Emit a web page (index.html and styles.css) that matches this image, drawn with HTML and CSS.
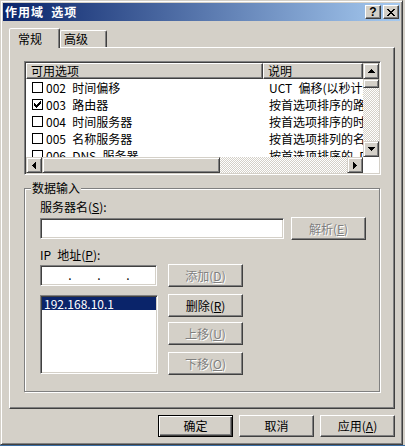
FILE: index.html
```html
<!doctype html>
<html lang="zh-CN">
<head>
    <meta charset="UTF-8">
    <title>作用域 选项</title>
    <link rel="stylesheet" href="styles.css">
</head>
<body>

<div class="window">
    <div class="titlebar">
        <span class="title">作用域 选项</span>
        <span class="cap-btn help">?</span>
        <span class="cap-btn close">
            <svg width="8" height="7" viewBox="0 0 8 7"><path d="M0 0h2v1H0zM6 0h2v1H6zM1 1h2v1H1zM5 1h2v1H5zM2 2h4v1H2zM3 3h2v1H3zM2 4h4v1H2zM1 5h2v1H1zM5 5h2v1H5zM0 6h2v1H0zM6 6h2v1H6z"/></svg>
        </span>
    </div>

    <div class="client">
        <div class="tabs">
            <div class="tab active">常规</div>
            <div class="tab">高级</div>
        </div>

        <div class="tab-page">
            <div class="listview">
                <div class="lv-main">
                    <div class="lv-header">
                        <div class="lv-col c1">可用选项</div>
                        <div class="lv-col c2">说明</div>
                    </div>
                    <ul class="lv-rows">
                        <li>
                            <span class="c1"><span class="check"></span>002 时间偏移</span>
                            <span class="c2">UCT 偏移(以秒计)</span>
                        </li>
                        <li>
                            <span class="c1"><span class="check"><svg width="7" height="7" viewBox="0 0 7 7"><path d="M6 0h1v1H6zM5 1h2v1H5zM0 2h1v1H0zM4 2h3v1H4zM0 3h2v1H0zM3 3h3v1H3zM0 4h5v1H0zM1 5h3v1H1zM2 6h1v1H2z"/></svg></span>003 路由器</span>
                            <span class="c2">按首选项排序的路由器地址数组</span>
                        </li>
                        <li>
                            <span class="c1"><span class="check"></span>004 时间服务器</span>
                            <span class="c2">按首选项排序的时间服务器地址数组</span>
                        </li>
                        <li>
                            <span class="c1"><span class="check"></span>005 名称服务器</span>
                            <span class="c2">按首选项排列的名称服务器地址数组</span>
                        </li>
                        <li>
                            <span class="c1"><span class="check"></span>006 DNS 服务器</span>
                            <span class="c2">按首选项排序的 DNS 服务器数组</span>
                        </li>
                    </ul>
                </div>
                <div class="vscroll">
                    <div class="sb-btn"><svg width="7" height="4" viewBox="0 0 7 4"><path d="M3 0h1v1H3zM2 1h3v1H2zM1 2h5v1H1zM0 3h7v1H0z"/></svg></div>
                    <div class="sb-thumb v"></div>
                    <div class="sb-track"></div>
                    <div class="sb-btn"><svg width="7" height="4" viewBox="0 0 7 4"><path d="M0 0h7v1H0zM1 1h5v1H1zM2 2h3v1H2zM3 3h1v1H3z"/></svg></div>
                </div>
                <div class="hscroll">
                    <div class="sb-btn"><svg width="4" height="7" viewBox="0 0 4 7"><path d="M3 0h1v7H3zM2 1h1v5H2zM1 2h1v3H1zM0 3h1v1H0z"/></svg></div>
                    <div class="sb-thumb h"></div>
                    <div class="sb-track"></div>
                    <div class="sb-btn"><svg width="4" height="7" viewBox="0 0 4 7"><path d="M0 0h1v7H0zM1 1h1v5H1zM2 2h1v3H2zM3 3h1v1H3z"/></svg></div>
                </div>
                <div class="sb-corner"></div>
            </div>

            <div class="group">
                <div class="group-title">数据输入</div>
                <div class="group-body">
                    <div class="field-label">服务器名(<u>S</u>):</div>
                    <div class="field-row">
                        <div class="textbox server-name"></div>
                        <div class="btn disabled resolve">解析(<u>E</u>)</div>
                    </div>

                    <div class="field-label second">IP 地址(<u>P</u>):</div>
                    <div class="field-row ip-row">
                        <div class="textbox ip-box">
                            <span class="oct"></span><span class="dot">.</span>
                            <span class="oct"></span><span class="dot">.</span>
                            <span class="oct"></span><span class="dot">.</span>
                            <span class="oct"></span>
                        </div>
                        <div class="btn disabled add">添加(<u>D</u>)</div>
                    </div>

                    <div class="ip-list-row">
                        <ul class="listbox">
                            <li class="selected">192.168.10.1</li>
                        </ul>
                        <div class="side-btns">
                            <div class="btn">删除(<u>R</u>)</div>
                            <div class="btn disabled up">上移(<u>U</u>)</div>
                            <div class="btn disabled down">下移(<u>O</u>)</div>
                        </div>
                    </div>
                </div>
            </div>
        </div>

        <div class="dlg-buttons">
            <div class="btn default">确定</div>
            <div class="btn">取消</div>
            <div class="btn">应用(<u>A</u>)</div>
        </div>
    </div>
</div>
<div class="desktop-edge"></div>

</body>
</html>
```

FILE: styles.css
```css
* {
    margin: 0;
    padding: 0;
    box-sizing: border-box;
    list-style: none;
}

html,
body {
    background-color: #d4d0c8;
}

body {
    width: 405px;
    height: 446px;
    overflow: hidden;
    font: 12px "Noto Sans CJK SC", "Liberation Sans", sans-serif;
    word-spacing: 3.5px;
    color: #000;
}

svg {
    display: block;
    fill: #000;
}

.window {
    width: 403px;
    height: 445px;
    padding: 2px;
    border: 1px solid;
    border-color: #d4d0c8 #404040 #404040 #d4d0c8;
    box-shadow: inset 1px 1px #fff, inset -1px -1px #808080;
}

.desktop-edge {
    height: 1px;
    background-color: #3a6ea5;
}

/* title bar */
.titlebar {
    display: flex;
    align-items: center;
    height: 18px;
    padding: 0 1px 0 2px;
    background: linear-gradient(to right, #0a246a, #a6caf0);
    color: #fff;
}

.titlebar .title {
    flex: 1;
    font-weight: bold;
    line-height: 18px;
    letter-spacing: 1px;
}

.cap-btn {
    display: flex;
    align-items: center;
    justify-content: center;
    width: 16px;
    height: 14px;
    margin-left: 2px;
    color: #000;
    background-color: #d4d0c8;
    border: 1px solid;
    border-color: #fff #404040 #404040 #fff;
    box-shadow: inset -1px -1px #808080;
}

.cap-btn.help {
    font: bold 12px "Liberation Sans", sans-serif;
    line-height: 12px;
}

/* tabs */
.client {
    padding: 7px 5px 0 6px;
}

.tabs {
    display: flex;
    align-items: flex-end;
    height: 19px;
}

.tab {
    width: 47px;
    height: 17px;
    padding-left: 3px;
    line-height: 16px;
    border: 1px solid;
    border-bottom: 0;
    border-color: #fff #404040 transparent #fff;
    border-radius: 2px 2px 0 0;
    box-shadow: inset -1px 0 #808080;
}

.tab.active {
    position: relative;
    z-index: 1;
    width: 51px;
    height: 20px;
    margin-bottom: -1px;
    padding-left: 8px;
    line-height: 19px;
    background-color: #d4d0c8;
}

.tab-page {
    height: 362px;
    padding: 13px 0 0 14px;
    border: 1px solid;
    border-color: #fff #404040 #404040 #fff;
    box-shadow: inset -1px -1px #808080;
}

/* list view */
.listview {
    display: grid;
    grid-template-columns: 337px 16px;
    grid-template-rows: 94px 16px;
    width: 357px;
    height: 114px;
    padding: 1px;
    background-color: #fff;
    border: 1px solid;
    border-color: #808080 #fff #fff #808080;
    box-shadow: inset 1px 1px #404040, inset -1px -1px #d4d0c8;
}

.lv-main {
    overflow: hidden;
}

.lv-header {
    display: flex;
    height: 16px;
}

.lv-col {
    padding-left: 4px;
    line-height: 14px;
    background-color: #d4d0c8;
    border: 1px solid;
    border-color: #fff #404040 #404040 #fff;
    box-shadow: inset -1px -1px #808080;
}

.c1 {
    flex: none;
    width: 237px;
}

.c2 {
    flex: none;
    width: 100px;
}

.lv-rows {
    height: 78px;
    overflow: hidden;
}

.lv-rows li {
    display: flex;
    height: 17px;
    line-height: 17px;
    white-space: nowrap;
}

.lv-rows .c1 {
    display: flex;
    align-items: center;
    padding-left: 6px;
}

.lv-rows .c2 {
    padding-left: 6px;
    overflow: hidden;
}

.check {
    display: flex;
    align-items: center;
    justify-content: center;
    width: 11px;
    height: 11px;
    margin-right: 3px;
    background-color: #fff;
    border: 1px solid #000;
}

/* scroll bars */
.vscroll,
.hscroll {
    display: flex;
}

.vscroll {
    flex-direction: column;
}

.sb-btn,
.sb-thumb {
    display: flex;
    flex: none;
    align-items: center;
    justify-content: center;
    width: 16px;
    height: 16px;
    background-color: #d4d0c8;
    border: 1px solid;
    border-color: #d4d0c8 #404040 #404040 #d4d0c8;
    box-shadow: inset 1px 1px #fff, inset -1px -1px #808080;
}

.sb-thumb.v {
    height: 9px;
}

.sb-thumb.h {
    width: 178px;
}

.sb-track {
    flex: 1;
    background: repeating-conic-gradient(#fff 0 25%, #d4d0c8 0 50%) 0 0 / 2px 2px;
}

.sb-corner {
    background-color: #fff;
}

/* group box */
.group {
    width: 356px;
    height: 204px;
    margin-top: 13px;
    border: 1px solid #808080;
    box-shadow: inset 1px 1px #fff, 1px 1px #fff;
}

.group-title {
    width: max-content;
    margin: -8px 0 0 6px;
    padding: 0 1px;
    line-height: 14px;
    background-color: #d4d0c8;
}

.group-body {
    padding-left: 15px;
}

.field-label {
    margin-top: 5px;
    line-height: 14px;
}

.field-label.second {
    margin-top: 8px;
}

.field-row {
    display: flex;
    align-items: center;
    margin-top: 3px;
}

.ip-row {
    margin-top: 2px;
}

.textbox,
.listbox {
    height: 21px;
    background-color: #fff;
    border: 1px solid;
    border-color: #808080 #fff #fff #808080;
    box-shadow: inset 1px 1px #404040, inset -1px -1px #d4d0c8;
}

.server-name {
    width: 244px;
}

.resolve {
    margin-left: 7px;
}

.ip-box {
    display: flex;
    width: 117px;
    padding-left: 2px;
    line-height: 17px;
}

.ip-box .oct {
    width: 25px;
}

.ip-box .dot {
    width: 4px;
    text-align: center;
}

.add {
    margin-left: 11px;
}

.ip-list-row {
    display: flex;
    align-items: flex-start;
    margin-top: 7px;
}

.listbox {
    width: 118px;
    height: 79px;
    margin-top: 1px;
    padding: 1px;
}

.listbox li {
    height: 13px;
    padding-left: 2px;
    line-height: 13px;
}

.listbox li.selected {
    color: #fff;
    background-color: #0a246a;
}

.side-btns {
    margin-left: 10px;
}

.side-btns .up {
    margin-top: 5px;
}

.side-btns .down {
    margin-top: 7px;
}

/* buttons */
.btn {
    width: 75px;
    height: 23px;
    line-height: 21px;
    text-align: center;
    background-color: #d4d0c8;
    border: 1px solid;
    border-color: #fff #404040 #404040 #fff;
    box-shadow: inset -1px -1px #808080;
}

.btn.disabled {
    color: #808080;
    text-shadow: 1px 1px #fff;
}

.btn.default {
    border-color: #000;
    box-shadow: inset 1px 1px #fff, inset -1px -1px #404040, inset -2px -2px #808080;
}

.dlg-buttons {
    display: flex;
    justify-content: flex-end;
    gap: 6px;
    margin-top: 6px;
}

.dlg-buttons .btn {
    height: 22px;
    line-height: 20px;
}
```
